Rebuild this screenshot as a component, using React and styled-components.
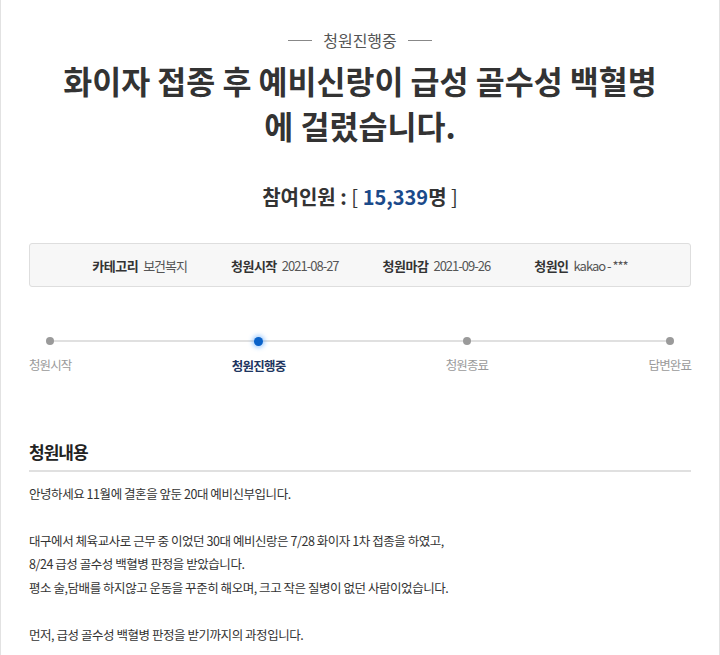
import React from "react";
import styled, { createGlobalStyle } from "styled-components";

const GlobalStyle = createGlobalStyle`
  html, body { margin: 0; padding: 0; background: #fff; }
  body { font-family: "Noto Sans CJK KR", "Noto Sans", sans-serif; color: #333; }
`;

const Page = styled.div`
  box-sizing: border-box;
  width: 720px;
  min-height: 655px;
  border-left: 1px solid #e2e2e2;
  border-right: 1px solid #e2e2e2;
  padding: 30px 28px 0 28px;
`;

const Status = styled.div`
  display: flex;
  align-items: center;
  justify-content: center;
  gap: 11px;
  font-size: 16px;
  line-height: 20px;
  letter-spacing: 0;
  color: #555;
  &::before, &::after {
    content: "";
    width: 24px;
    height: 1px;
    background: #888;
  }
`;

const Title = styled.h1`
  margin: 7.5px 0 0;
  text-align: center;
  font-size: 31.5px;
  line-height: 45px;
  font-weight: 700;
  letter-spacing: 0;
  color: #333;
`;

const Count = styled.div`
  margin-top: 35.5px;
  text-align: center;
  font-size: 20px;
  line-height: 28px;
  font-weight: 700;
  letter-spacing: 0;
  color: #333;
`;

const Num = styled.span`
  color: #1b4a8a;
`;

const Bracket = styled.span`
  font-weight: 400;
`;

const InfoBox = styled.div`
  box-sizing: border-box;
  margin-top: 32px;
  height: 44px;
  background: #f7f7f7;
  border: 1px solid #dedede;
  border-radius: 3px;
  display: flex;
  align-items: center;
  justify-content: center;
  gap: 44px;
`;

const InfoItem = styled.div`
  display: flex;
  align-items: center;
  gap: 5px;
  font-size: 13px;
  white-space: nowrap;
`;

const InfoLabel = styled.span`
  font-weight: 700;
  letter-spacing: -0.5px;
  color: #333;
`;

const InfoValue = styled.span`
  letter-spacing: -1px;
  color: #555;
`;

const Progress = styled.div`
  position: relative;
  margin-top: 49px;
  display: flex;
  justify-content: space-between;
  &::before {
    content: "";
    position: absolute;
    left: 22px;
    right: 22px;
    top: 4px;
    height: 2px;
    background: #e0e0e0;
  }
`;

const Step = styled.div`
  position: relative;
  display: flex;
  flex-direction: column;
  align-items: center;
  gap: 12px;
`;

const Dot = styled.span`
  width: ${p => (p.$active ? 9 : 8)}px;
  height: ${p => (p.$active ? 9 : 8)}px;
  margin-top: ${p => (p.$active ? 0.5 : 1)}px;
  border-radius: 50%;
  background: ${p => (p.$active ? "#0a62c9" : "#9a9a9a")};
  box-shadow: ${p => (p.$active ? "0 0 4px 2px rgba(60,150,255,0.45)" : "none")};
`;

const StepLabel = styled.span`
  font-size: 12.5px;
  line-height: 16px;
  letter-spacing: ${p => (p.$active ? -0.8 : -0.9)}px;
  font-weight: ${p => (p.$active ? 700 : 400)};
  color: ${p => (p.$active ? "#1e3560" : "#9a9a9a")};
  white-space: nowrap;
`;

const SectionTitle = styled.h2`
  margin: 66px 0 0;
  padding-bottom: 6px;
  border-bottom: 2px solid #e0e0e0;
  font-size: 17px;
  line-height: 24px;
  font-weight: 700;
  letter-spacing: -1px;
  color: #222;
`;

const Body = styled.div`
  margin-top: 10px;
  font-size: 12.5px;
  line-height: 23.5px;
  letter-spacing: -0.45px;
  color: #333;
`;

const Line = styled.p`
  margin: 0;
  min-height: 23.5px;
`;

const steps = [
  { label: "청원시작" },
  { label: "청원진행중", active: true },
  { label: "청원종료" },
  { label: "답변완료" },
];

const lines = [
  "안녕하세요 11월에 결혼을 앞둔 20대 예비신부입니다.",
  "",
  "대구에서 체육교사로 근무 중 이었던 30대 예비신랑은 7/28 화이자 1차 접종을 하였고,",
  "8/24 급성 골수성 백혈병 판정을 받았습니다.",
  "평소 술,담배를 하지않고 운동을 꾸준히 해오며, 크고 작은 질병이 없던 사람이었습니다.",
  "",
  "먼저, 급성 골수성 백혈병 판정을 받기까지의 과정입니다.",
];

export default function App() {
  return (
    <>
      <GlobalStyle />
      <Page>
        <Status>청원진행중</Status>
        <Title>
          화이자 접종 후 예비신랑이 급성 골수성 백혈병
          <br />
          에 걸렸습니다.
        </Title>
        <Count>
          참여인원 : <Bracket>[</Bracket> <Num>15,339</Num>명 <Bracket>]</Bracket>
        </Count>
        <InfoBox>
          <InfoItem>
            <InfoLabel>카테고리</InfoLabel>
            <InfoValue>보건복지</InfoValue>
          </InfoItem>
          <InfoItem>
            <InfoLabel>청원시작</InfoLabel>
            <InfoValue>2021-08-27</InfoValue>
          </InfoItem>
          <InfoItem>
            <InfoLabel>청원마감</InfoLabel>
            <InfoValue>2021-09-26</InfoValue>
          </InfoItem>
          <InfoItem>
            <InfoLabel>청원인</InfoLabel>
            <InfoValue>kakao - ***</InfoValue>
          </InfoItem>
        </InfoBox>
        <Progress>
          {steps.map(s => (
            <Step key={s.label}>
              <Dot $active={s.active} />
              <StepLabel $active={s.active}>{s.label}</StepLabel>
            </Step>
          ))}
        </Progress>
        <SectionTitle>청원내용</SectionTitle>
        <Body>
          {lines.map((l, i) => (
            <Line key={i}>{l}</Line>
          ))}
        </Body>
      </Page>
    </>
  );
}
